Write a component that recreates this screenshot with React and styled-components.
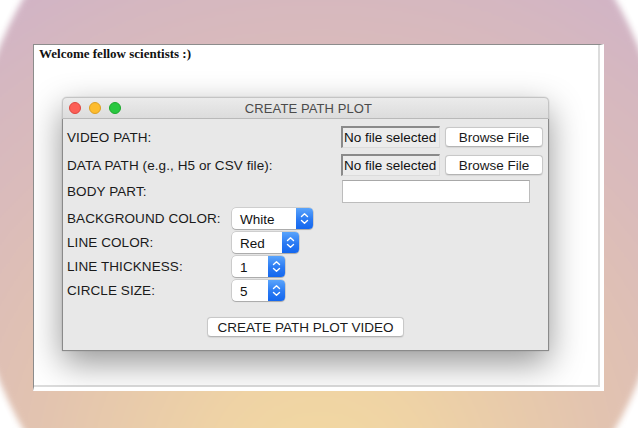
import React from "react";
import styled, { createGlobalStyle } from "styled-components";

const GlobalStyle = createGlobalStyle`
  html, body { margin: 0; padding: 0; background: #fff; }
  body { width: 638px; height: 428px; overflow: hidden; }
  * { box-sizing: border-box; }
`;

const Page = styled.div`
  position: relative;
  isolation: isolate;
  width: 638px;
  height: 428px;
  overflow: hidden;
  padding: 44px 34px 37px 33px;
  background: #fff;
  &::before {
    content: "";
    position: absolute;
    z-index: -1;
    left: -33px;
    top: -184px;
    width: 704px;
    height: 796px;
    border-radius: 50%;
    filter: blur(3px);
    background: radial-gradient(
      circle at 352px 664px,
      #f3daa0 0px,
      #efd3a5 110px,
      #e2c3b0 290px,
      #dabbbb 420px,
      #d6b8bf 490px,
      #cfb2c8 600px
    );
  }
`;

const Panel = styled.div`
  height: 100%;
  background: #fff;
  border-top: 1px solid #8c8c8c;
  border-left: 1px solid #8c8c8c;
  border-right: 4px solid #fff;
  border-bottom: 4px solid #fff;
  box-shadow: inset -2px -2px 0 #dcdcdc;
  overflow: hidden;
  padding: 2px 0 0 5px;
`;

const Welcome = styled.div`
  font-family: "Liberation Serif", "Times New Roman", serif;
  font-weight: bold;
  font-size: 13px;
  line-height: 14px;
  color: #111;
`;

const Dialog = styled.div`
  margin: 36px 0 0 23px;
  width: 487px;
  height: 254px;
  border-radius: 5px 5px 0 0;
  box-shadow: 0 12px 34px rgba(0, 0, 0, 0.42), 0 0 1px rgba(0, 0, 0, 0.4);
  display: flex;
  flex-direction: column;
  font-family: "Liberation Sans", Arial, sans-serif;
`;

const TitleBar = styled.div`
  height: 22px;
  flex: none;
  border-radius: 5px 5px 0 0;
  background: linear-gradient(180deg, #ebebeb 0%, #dcdcdc 100%);
  border: 1px solid #c4c4c4;
  border-bottom: 1px solid #b9b9b9;
  display: grid;
  grid-template-columns: 1fr auto 1fr;
  align-items: center;
  padding-left: 6px;
`;

const Lights = styled.div`
  display: flex;
  gap: 8px;
  align-items: center;
`;

const Light = styled.span`
  width: 12px;
  height: 12px;
  border-radius: 50%;
  background: ${(p) => p.$c};
  border: 0.5px solid ${(p) => p.$b};
`;

const Title = styled.div`
  font-size: 13px;
  color: #4b4b4b;
  letter-spacing: 0.1px;
`;

const Content = styled.div`
  flex: 1;
  background: #e8e8e8;
  border: 1px solid #8a8a8a;
  border-top: none;
  padding: 7px 4px 0 4px;
  display: flex;
  flex-direction: column;
`;

const Row = styled.div`
  display: flex;
  align-items: center;
  height: ${(p) => p.$h}px;
  margin-top: ${(p) => p.$mt || 0}px;
`;

const Label = styled.div`
  width: ${(p) => p.$w}px;
  flex: none;
  font-size: 13.5px;
  letter-spacing: 0.08px;
  color: #1a1a1a;
  white-space: nowrap;
`;

const FileBox = styled.div`
  width: 99px;
  height: 22px;
  background: #ececec;
  border-top: 2px solid #8a8a8a;
  border-left: 2px solid #8a8a8a;
  border-right: 1px solid #dcdcdc;
  border-bottom: 1px solid #dcdcdc;
  font-size: 13.5px;
  color: #111;
  display: flex;
  align-items: center;
  padding-left: 1px;
  white-space: nowrap;
  overflow: hidden;
`;

const Button = styled.button`
  width: ${(p) => p.$w}px;
  height: 20px;
  margin-left: ${(p) => p.$ml || 0}px;
  background: #fff;
  border: 1px solid #c8c8c8;
  border-bottom-color: #b4b4b4;
  border-radius: 4px;
  box-shadow: 0 0.5px 1px rgba(0, 0, 0, 0.08);
  font-family: "Liberation Sans", Arial, sans-serif;
  font-size: 13.5px;
  color: #1a1a1a;
  padding: 0;
  display: flex;
  align-items: center;
  justify-content: center;
  white-space: nowrap;
`;

const Entry = styled.div`
  width: 188px;
  height: 23px;
  background: #fff;
  border: 1px solid #bcbcbc;
  border-top-color: #a8a8a8;
`;

const Select = styled.div`
  width: ${(p) => p.$w}px;
  height: 21px;
  background: #fff;
  border-radius: 4px;
  box-shadow: 0 0 0 0.5px rgba(0, 0, 0, 0.22), 0 1px 1px rgba(0, 0, 0, 0.18);
  display: flex;
  align-items: stretch;
  overflow: hidden;
`;

const SelectText = styled.div`
  flex: 1;
  font-size: 13.5px;
  color: #111;
  padding: 1px 0 0 8px;
  display: flex;
  align-items: center;
`;

const Stepper = styled.div`
  width: 17px;
  flex: none;
  background: linear-gradient(180deg, #5aa4fb 0%, #2a7af3 55%, #1467ee 100%);
  display: flex;
  align-items: center;
  justify-content: center;
`;

const Footer = styled.div`
  display: flex;
  justify-content: center;
  margin-top: 16px;
`;

const Chevrons = () => (
  <svg width="9" height="13" viewBox="0 0 9 13">
    <path d="M1.5 4.5 L4.5 1.8 L7.5 4.5" fill="none" stroke="#fff" strokeWidth="1.4" strokeLinecap="round" strokeLinejoin="round" />
    <path d="M1.5 8.5 L4.5 11.2 L7.5 8.5" fill="none" stroke="#fff" strokeWidth="1.4" strokeLinecap="round" strokeLinejoin="round" />
  </svg>
);

const SelectRow = ({ label, value, w, mt }) => (
  <Row $h={21} $mt={mt}>
    <Label $w={165}>{label}</Label>
    <Select $w={w}>
      <SelectText>{value}</SelectText>
      <Stepper>
        <Chevrons />
      </Stepper>
    </Select>
  </Row>
);

export default function App() {
  return (
    <>
      <GlobalStyle />
      <Page>
        <Panel>
          <Welcome>Welcome fellow scientists :)</Welcome>
          <Dialog>
            <TitleBar>
              <Lights>
                <Light $c="#fc5f57" $b="#de463e" />
                <Light $c="#fdbc2e" $b="#dc9f22" />
                <Light $c="#29c840" $b="#1ca82c" />
              </Lights>
              <Title>CREATE PATH PLOT</Title>
              <span />
            </TitleBar>
            <Content>
              <Row $h={22}>
                <Label $w={274}>VIDEO PATH:</Label>
                <FileBox>No file selected</FileBox>
                <Button $w={98} $ml={5}>Browse File</Button>
              </Row>
              <Row $h={22} $mt={6}>
                <Label $w={274}>DATA PATH (e.g., H5 or CSV file):</Label>
                <FileBox>No file selected</FileBox>
                <Button $w={98} $ml={5}>Browse File</Button>
              </Row>
              <Row $h={23} $mt={4}>
                <Label $w={275}>BODY PART:</Label>
                <Entry />
              </Row>
              <SelectRow label="BACKGROUND COLOR:" value="White" w={81} mt={5} />
              <SelectRow label="LINE COLOR:" value="Red" w={67} mt={3} />
              <SelectRow label="LINE THICKNESS:" value="1" w={53} mt={3} />
              <SelectRow label="CIRCLE SIZE:" value="5" w={53} mt={3} />
              <Footer>
                <Button $w={197}>CREATE PATH PLOT VIDEO</Button>
              </Footer>
            </Content>
          </Dialog>
        </Panel>
      </Page>
    </>
  );
}
